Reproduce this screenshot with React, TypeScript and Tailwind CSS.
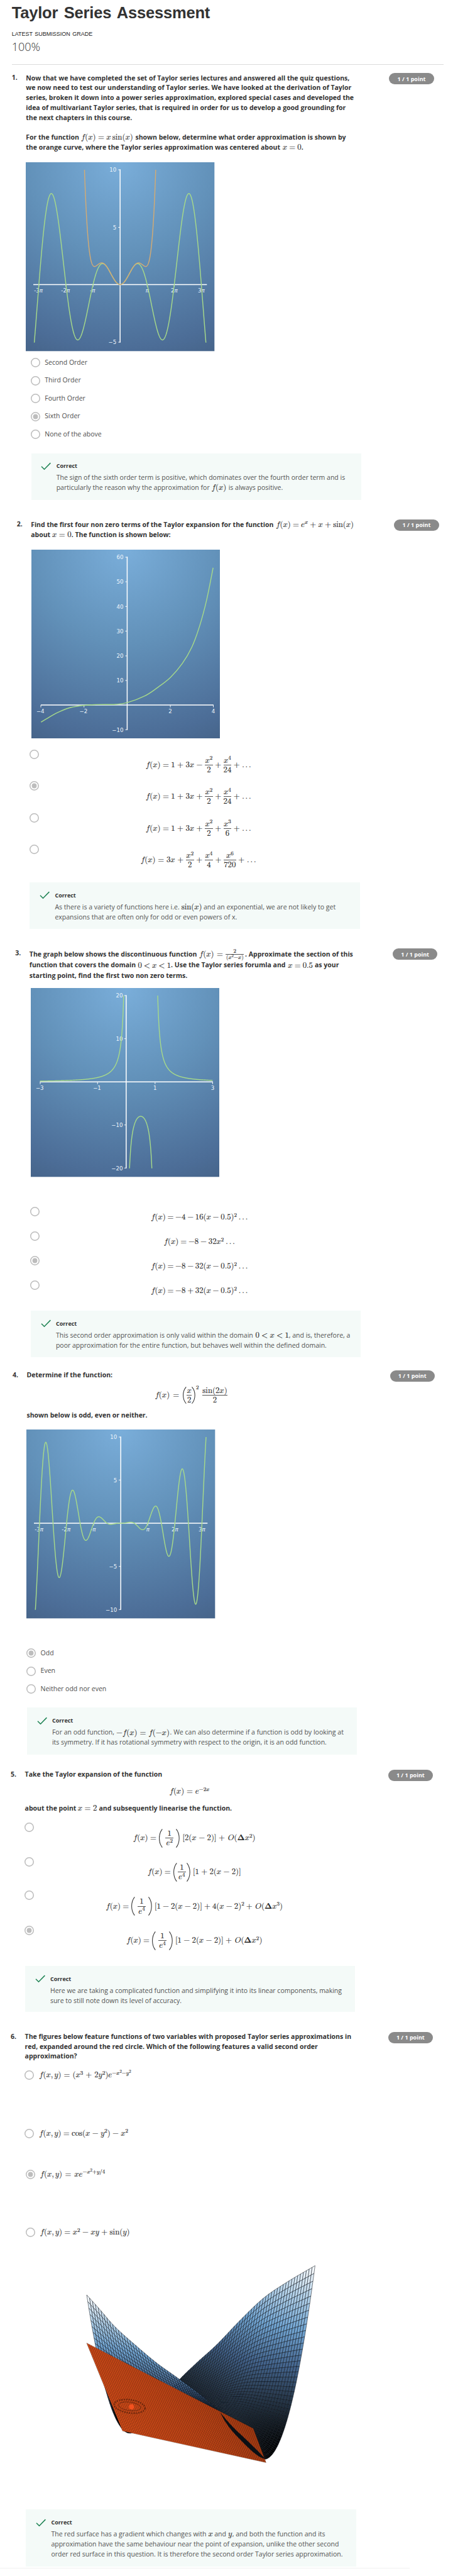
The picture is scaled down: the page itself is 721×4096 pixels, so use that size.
import type { ReactNode } from "react";

type Kids = { children?: ReactNode };
type Pt = [number, number];

/* ---------- text ---------- */

function T({ w, children }: Kids & { w: string }) {
  return <span className={`block shrink-0 whitespace-nowrap [text-align-last:justify] ${w}`}>{children}</span>;
}

function Line({ h = "h-[21px]", children }: Kids & { h?: string }) {
  return <div className={`flex items-center leading-[21px] ${h}`}>{children}</div>;
}

/* ---------- math ---------- */

function M({ w, children }: Kids & { w: string }) {
  return (
    <span className={`flex shrink-0 items-center justify-between whitespace-nowrap font-['Latin_Modern_Math',math,'Liberation_Serif',serif] text-[17px] font-normal leading-[20px] text-[#262626] [-webkit-text-stroke:0.2px_#262626] ${w}`}>
      {children}
    </span>
  );
}

const Fx = () => <span>𝑓(𝑥)</span>;
const Fxy = () => <span>𝑓(𝑥,<span className="ml-[2.5px]">𝑦)</span></span>;
const Dots = () => <span className="tracking-[2.6px]">...</span>;

const Sup = ({ children }: Kids) => (
  <span className="relative -top-[6px] inline-block text-[12px] leading-[12px]">{children}</span>
);

const Tiny = ({ children }: Kids) => <span className="relative -top-[4px] text-[9px]">{children}</span>;

function Frac({ n, d, w }: { n: ReactNode; d: ReactNode; w: string }) {
  return (
    <span className={`flex flex-col items-center text-center leading-[19px] ${w}`}>
      <span className="block h-[19px]">{n}</span>
      <span className="block h-[1.4px] w-full bg-[#555]" />
      <span className="block h-[19px]">{d}</span>
    </span>
  );
}

function Paren({ flip = false, h = "h-[40px]" }: { flip?: boolean; h?: string }) {
  return (
    <svg className={`w-[9px] ${h} ${flip ? "-scale-x-100" : ""}`} viewBox="0 0 9 40" preserveAspectRatio="none" fill="none" stroke="#333">
      <path d="M8.4 0.5C0 11 0 29 8.4 39.5" strokeWidth="1.4" />
    </svg>
  );
}

/* ---------- controls ---------- */

function Radio({ on = false }: { on?: boolean }) {
  return (
    <svg className="size-[20px] shrink-0" viewBox="0 0 20 20">
      <circle cx="10" cy="10" r="9" fill="#fff" stroke="#bdbdbd" strokeWidth="2" />
      {on && <circle cx="10" cy="10" r="5.2" fill="#bdbdbd" />}
    </svg>
  );
}

function Choice({ on, w, children }: Kids & { on?: boolean; w: string }) {
  return (
    <div className="flex h-[38px] items-center">
      <Radio on={on} />
      <span className="ml-[10px] text-[14px] leading-[21px] text-[#4d4d4d]"><T w={w}>{children}</T></span>
    </div>
  );
}

function MathChoice({ on, h, mt, children }: Kids & { on?: boolean; h: string; mt: string }) {
  return (
    <div className={`flex ${h}`}>
      <Radio on={on} />
      <div className={`flex h-0 w-[680px] items-center justify-center ${mt}`}>{children}</div>
    </div>
  );
}

function Feedback({ h, ml, children }: Kids & { h: string; ml: string }) {
  return (
    <div className={`flex w-[700px] bg-[#f4faf8] pt-[17px] ${h} ${ml}`}>
      <svg className="ml-[21px] mt-[2px] h-[17px] w-[22px] shrink-0" viewBox="0 0 22 17" fill="none" stroke="#1f8354" strokeWidth="2">
        <path d="M1.3 9L7.3 15L20.5 1.5" />
      </svg>
      <div className="ml-[10.5px] text-[14px] text-[#525252]">
        <div className="mb-[5px] text-[12px] font-bold leading-[20px] text-[#333]"><T w="w-[44.5px]">Correct</T></div>
        {children}
      </div>
    </div>
  );
}

function Question({ n, pl, h, children }: Kids & { n: number; pl: string; h: string }) {
  return (
    <section className={`flex ${pl} ${h}`}>
      <div className="w-[30px] shrink-0 text-[14px] font-bold leading-[21px] text-[#333]">{n}.</div>
      <div className="w-[770px] shrink-0">{children}</div>
      <div className="flex h-[24px] w-[95px] shrink-0 items-center justify-center rounded-[12px] bg-[#8a8a8a] text-[12px] font-bold text-white">
        1 / 1 point
      </div>
    </section>
  );
}

const Prompt = ({ children }: Kids) => <div className="pt-[0.4px] text-[14px] font-bold text-[#333]">{children}</div>;

/* ---------- plots ---------- */

const toPath = (pts: Pt[]) => pts.map(([x, y], i) => `${i ? "L" : "M"}${x.toFixed(2)} ${y.toFixed(2)}`).join("");

function sample(fn: (x: number) => number, a: number, b: number, sx: (x: number) => number, sy: (y: number) => number) {
  const pts: Pt[] = [];
  const steps = 600;
  for (let i = 0; i <= steps; i++) {
    const x = a + ((b - a) * i) / steps;
    const y = fn(x);
    if (Math.abs(y) < 60) pts.push([sx(x), sy(y)]);
  }
  return toPath(pts);
}

type Label = [string, number];

function Plot({ id, ox, oy, x0, x1, xs, ys, lx, margin, children }: Kids & {
  id: string; ox: number; oy: number; x0: number; x1: number; xs: Label[]; ys: Label[]; lx: number; margin: string;
}) {
  return (
    <svg className={`block h-[400px] w-[400px] ${margin}`} viewBox="0 0 400 400" fontFamily="'DejaVu Sans',sans-serif" fontSize="11.5" fill="#eef5fb">
      <defs>
        <radialGradient id={`bg-${id}`} gradientUnits="userSpaceOnUse" cx="200" cy="0" r="450">
          <stop offset="0" stopColor="#7aaeda" />
          <stop offset="0.44" stopColor="#6291b9" />
          <stop offset="0.88" stopColor="#4c6d97" />
          <stop offset="1" stopColor="#466489" />
        </radialGradient>
        <clipPath id={`clip-${id}`}><rect x="10" y="16" width="380" height="366" /></clipPath>
      </defs>
      <rect width="400" height="400" fill={`url(#bg-${id})`} />
      <g stroke="#fff" strokeWidth="2">
        <path d={`M${x0} ${oy}H${x1}M${ox} 15V382`} />
        <path strokeWidth="1.2" d={xs.map(([, x]) => `M${x} ${oy}v5`).join("") + ys.map(([, y]) => `M${ox} ${y}h-4`).join("")} />
      </g>
      {xs.map(([t, x]) => (
        <text key={t} x={x - (t.startsWith("-") || t.startsWith("−") ? 1 : 0)} y={oy + 17} textAnchor="middle">
          {t.replace("π", "")}{t.includes("π") && <tspan fontStyle="italic">π</tspan>}
        </text>
      ))}
      {ys.map(([t, y]) => <text key={t} x={lx} y={y + 4.5} textAnchor="end">{t}</text>)}
      <g fill="none" stroke="#a6d98a" strokeWidth="1.9" clipPath={`url(#clip-${id})`}>{children}</g>
    </svg>
  );
}

const PI_LABELS: Label[] = [["-3π", 27.8], ["-2π", 85.2], ["-π", 142.6], ["π", 257.4], ["2π", 314.8], ["3π", 372.2]];
const piX = (x: number) => 200 + (x / Math.PI) * 57.4;

function Plot1() {
  const sy = (y: number) => 259 - y * 24.35;
  return (
    <Plot id="a" ox={200} oy={259} x0={16} x1={384} xs={PI_LABELS} ys={[["10", 16], ["5", 138], ["−5", 381]]} lx={192} margin="mt-[20.6px]">
      <path d={sample((x) => x * Math.sin(x), -10, 10, piX, sy)} />
      <path stroke="#d3ab74" d={sample((x) => x * x - x ** 4 / 6 + x ** 6 / 120, -4.3, 4.3, piX, sy)} />
    </Plot>
  );
}

const GROWTH: Pt[] = [
  [20.3, 365.2], [41.1, 352.7], [59.5, 343.2], [82.8, 334.4], [111.5, 329.7], [136, 328.2], [178.9, 327.6], [203.4, 323.9],
  [240.1, 309.8], [264.6, 294.1], [294.6, 270.6], [319.7, 241.3], [339.9, 206.8], [356.4, 162.3], [371.7, 105.3], [385.2, 38.3],
];

function spline(p: Pt[]) {
  let d = `M${p[0][0]} ${p[0][1]}`;
  for (let i = 0; i < p.length - 1; i++) {
    const a = p[Math.max(0, i - 1)], b = p[i], c = p[i + 1], e = p[Math.min(p.length - 1, i + 2)];
    d += `C${b[0] + (c[0] - a[0]) / 6} ${b[1] + (c[1] - a[1]) / 6} ${c[0] - (e[0] - b[0]) / 6} ${c[1] - (e[1] - b[1]) / 6} ${c[0]} ${c[1]}`;
  }
  return d;
}

function Plot2() {
  return (
    <Plot id="b" ox={203} oy={329} x0={20} x1={386} xs={[["−4", 20], ["−2", 111.5], ["2", 294.5], ["4", 385.6]]}
      ys={[["60", 16], ["50", 68], ["40", 120.3], ["30", 172.5], ["20", 225], ["10", 277], ["−10", 381.3]]} lx={195} margin="mt-[19.6px] ml-[0.5px]">
      <path d={spline(GROWTH)} />
    </Plot>
  );
}

function Plot3() {
  const f = (x: number) => 2 / (x * x - x);
  const sx = (x: number) => 202.5 + x * 61;
  const sy = (y: number) => 198.7 - y * 9.13;
  return (
    <Plot id="c" ox={202.2} oy={198.7} x0={19.5} x1={386} xs={[["−3", 20], ["−1", 141.5], ["1", 263.5], ["3", 385.5]]}
      ys={[["20", 16], ["10", 107.4], ["−10", 290], ["−20", 381.3]]} lx={195} margin="mt-[15.6px] ml-[2.6px]">
      <path d={sample(f, -3, -0.04, sx, sy)} />
      <path d={sample(f, 0.04, 0.96, sx, sy)} />
      <path d={sample(f, 1.04, 3, sx, sy)} />
    </Plot>
  );
}

function Plot4() {
  const sy = (y: number) => 198.5 - y * 18.27;
  return (
    <Plot id="d" ox={200} oy={198.5} x0={16} x1={384} xs={PI_LABELS} ys={[["10", 16], ["5", 107], ["−5", 290], ["−10", 381.3]]} lx={192} margin="mt-[19.4px]">
      <path d={sample((x) => ((x / 2) ** 2 * Math.sin(2 * x)) / 2, -9.95, 9.95, piX, sy)} />
    </Plot>
  );
}

/* ---------- surface ---------- */

const BACK: Pt[] = [[0, 365], [0.233, 262], [0.336, 224], [0.45, 185], [0.582, 133], [0.714, 86], [0.847, 52], [1, 18]];
const FRONT: Pt[] = [[0, 80], [0.069, 109], [0.157, 147], [0.29, 192], [0.395, 225], [0.51, 256], [0.642, 293], [0.735, 325], [0.86, 374], [1, 428]];

function curve(p: Pt[], s: number) {
  let i = 0;
  while (i < p.length - 2 && s > p[i + 1][0]) i++;
  const slope = (k: number) => {
    const a = p[Math.max(0, k - 1)], b = p[Math.min(p.length - 1, k + 1)];
    return (b[1] - a[1]) / (b[0] - a[0]);
  };
  const w = p[i + 1][0] - p[i][0];
  const u = (s - p[i][0]) / w;
  return (
    (2 * u ** 3 - 3 * u * u + 1) * p[i][1] + (u ** 3 - 2 * u * u + u) * w * slope(i) +
    (-2 * u ** 3 + 3 * u * u) * p[i + 1][1] + (u ** 3 - u * u) * w * slope(i + 1)
  );
}

const surf = (s: number, t: number): Pt => [
  130 + 378 * s - 106 * t,
  (1 - t) * curve(BACK, s) + t * curve(FRONT, s) + 396 * t * (1 - t),
];

const RAMP: [number, number[]][] = [
  [0, [0, 0, 0]], [0.12, [20, 28, 36]], [0.25, [42, 60, 80]], [0.4, [66, 98, 138]], [0.62, [114, 166, 212]], [0.8, [176, 208, 233]], [1, [255, 255, 255]],
];

function shade(z: number) {
  const v = Math.min(1, Math.max(0, z));
  let i = 0;
  while (i < RAMP.length - 2 && v > RAMP[i + 1][0]) i++;
  const u = (v - RAMP[i][0]) / (RAMP[i + 1][0] - RAMP[i][0]);
  return `rgb(${RAMP[i][1].map((c, k) => Math.round(c + (RAMP[i + 1][1][k] - c) * u)).join(",")})`;
}

const red = (u: number, v: number): Pt => [
  (1 - v) * (24 + 353 * u) + v * (100 + 304 * u),
  (1 - v) * (182 + 181 * u) + v * (368 + 67 * u),
];

function Surface() {
  const NS = 62, NT = 48;
  const cells: ReactNode[] = [];
  for (let j = 0; j < NT; j++) {
    for (let i = 0; i < NS; i++) {
      const s = i / NS, t = j / NT, s2 = (i + 1) / NS, t2 = (j + 1) / NT;
      const mid = surf((s + s2) / 2, (t + t2) / 2);
      const z = (300 + 33 * (s + s2) / 2 + 95 * (t + t2) / 2 - mid[1]) / 315;
      cells.push(<path key={`${i}-${j}`} fill={shade(z)} d={toPath([surf(s, t), surf(s2, t), surf(s2, t2), surf(s, t2)]) + "Z"} />);
    }
  }
  let grid = "";
  for (let i = 0; i <= 72; i++) grid += toPath([red(i / 72, 0), red(i / 72, 1)]);
  for (let i = 0; i <= 48; i++) grid += toPath([red(0, i / 48), red(1, i / 48)]);
  return (
    <svg className="mt-[40px] ml-[107.3px] block h-[450px] w-[520px]" viewBox="0 0 520 450">
      <g stroke="#0b1118" strokeWidth="0.7">{cells}</g>
      <path d={toPath([red(0, 0), red(1, 0), red(1, 1), red(0, 1)]) + "Z"} fill="#e8541c" />
      <path d={grid} fill="none" stroke="#2a0f06" strokeWidth="0.5" />
      <g fill="none" stroke="#2a0f06" strokeOpacity="0.5" transform="rotate(8 115 316)">
        <ellipse cx="115" cy="316" rx="33" ry="14" strokeWidth="3" strokeDasharray="3 2" />
        <ellipse cx="115" cy="316" rx="24" ry="9" strokeWidth="1.2" />
      </g>
      <circle cx="119" cy="317" r="5.5" fill="#f4511e" />
      <path d="M307 329C315 338 325 352 352 377C368 392 392 415 403 428C385 424 366 403 349 386C330 367 318 352 307 329Z" fill="#0b0f14" />
    </svg>
  );
}

/* ---------- formulas ---------- */

const Pow = ({ p }: { p: string }) => <>𝑥<Sup>{p}</Sup></>;
const Shifted = ({ a, op, b }: { a: string; op: string; b: string }) => (
  <M w="w-[208px]">
    <Fx /><span>=</span><span>−{a}</span><span>{op}</span><span>{b}(𝑥</span><span>−</span><span>0.5)<Sup>2</Sup></span><Dots />
  </M>
);

function Terms({ op = "+", n, d }: { op?: string; n: string; d: string }) {
  return (
    <M w="w-[226px]">
      <Fx /><span>=</span><span>1</span><span>+</span><span>3𝑥</span><span>{op}</span>
      <Frac w="w-[17px]" n={<Pow p="2" />} d="2" /><span>+</span>
      <Frac w="w-[17px]" n={<Pow p={n} />} d={d} /><span>+</span><Dots />
    </M>
  );
}

const Coef = ({ p, w = "w-[46px]" }: { p: string; w?: string }) => (
  <span className={`flex items-center justify-between ${w}`}>
    <Paren /><Frac w="w-[17px]" n="1" d={<>𝑒<Sup>{p}</Sup></>} /><Paren flip />
  </span>
);

const Order = ({ p }: { p: string }) => <span className="ml-[2px]">𝑂(𝚫𝑥<Sup>{p}</Sup>)</span>;

export default function App() {
  return (
    <main className="h-[4096px] w-[721px] overflow-hidden bg-white">
      <div className="w-[960px] font-['Open_Sans',sans-serif] text-[#333] [zoom:0.7508]">
        <header className="h-[155px] pl-[25px]">
          <h1 className="pt-[7px] font-['Liberation_Sans',sans-serif] text-[34px] font-bold leading-[40px] tracking-[-0.28px]"><T w="w-[420px]">Taylor Series Assessment</T></h1>
          <div className="mt-[14px] font-['Liberation_Sans',sans-serif] text-[12px] leading-[22px] text-[#222]"><T w="w-[171px]">LATEST SUBMISSION GRADE</T></div>
          <div className="text-[24px] font-light leading-[32px]">100%</div>
          <div className="mt-[20.5px] w-[915px] border-t border-[#dcdcdc]" />
        </header>

        <Question n={1} pl="pl-[25px]" h="h-[945px]">
          <Prompt>
            <Line><T w="w-[686px]">Now that we have completed the set of Taylor series lectures and answered all the quiz questions,</T></Line>
            <Line><T w="w-[690px]">we now need to test our understanding of Taylor series. We have looked at the derivation of Taylor</T></Line>
            <Line><T w="w-[695px]">series, broken it down into a power series approximation, explored special cases and developed the</T></Line>
            <Line><T w="w-[678px]">idea of multivariant Taylor series, that is required in order for us to develop a good grounding for</T></Line>
            <Line><T w="w-[225px]">the next chapters in this course.</T></Line>
            <div className="h-[20px]" />
            <Line h="h-[22px]">
              <T w="w-[112px]">For the function</T>
              <span className="ml-[5px]"><M w="w-[110px]"><Fx /><span>=</span><span>𝑥<span className="ml-[3px]">sin(𝑥)</span></span></M></span>
              <span className="ml-[5px]"><T w="w-[446px]">shown below, determine what order approximation is shown by</T></span>
            </Line>
            <Line>
              <T w="w-[539px]">the orange curve, where the Taylor series approximation was centered about</T>
              <span className="ml-[5px]"><M w="w-[40px]"><span>𝑥</span><span>=</span><span>0</span></M></span>.
            </Line>
          </Prompt>
          <Plot1 />
          <div className="mt-[5px] ml-[10px]">
            <Choice w="w-[90px]">Second Order</Choice>
            <Choice w="w-[76px]">Third Order</Choice>
            <Choice w="w-[86px]">Fourth Order</Choice>
            <Choice on w="w-[75px]">Sixth Order</Choice>
            <Choice w="w-[120px]">None of the above</Choice>
          </div>
          <div className="h-[21px]" />
          <Feedback h="h-[98.5px]" ml="ml-[11px]">
            <Line><T w="w-[612px]">The sign of the sixth order term is positive, which dominates over the fourth order term and is</T></Line>
            <Line>
              <T w="w-[325px]">particularly the reason why the approximation for</T>
              <span className="ml-[4px]"><M w="w-[32px]"><Fx /></M></span>
              <span className="ml-[4px]"><T w="w-[115px]">is always positive.</T></span>
            </Line>
          </Feedback>
        </Question>

        <Question n={2} pl="pl-[35.5px]" h="h-[909px]">
          <Prompt>
            <Line h="h-[22px]">
              <T w="w-[514.5px]">Find the first four non zero terms of the Taylor expansion for the function</T>
              <span className="ml-[5px]"><M w="w-[165px]"><Fx /><span>=</span><span>𝑒<Sup>𝑥</Sup></span><span>+</span><span>𝑥</span><span>+</span><span>sin(𝑥)</span></M></span>
            </Line>
            <Line h="h-[22px]">
              <T w="w-[41px]">about</T>
              <span className="ml-[4px]"><M w="w-[41px]"><span>𝑥</span><span>=</span><span>0</span></M></span>
              <T w="w-[209px]">. The function is shown below:</T>
            </Line>
          </Prompt>
          <Plot2 />
          <div className="mt-[23.6px] -ml-[3.5px]">
            <MathChoice h="h-[67.3px]" mt="mt-[32.5px]"><Terms op="−" n="4" d="24" /></MathChoice>
            <MathChoice on h="h-[67.3px]" mt="mt-[32.5px]"><Terms n="4" d="24" /></MathChoice>
            <MathChoice h="h-[67.3px]" mt="mt-[32.5px]"><Terms n="3" d="6" /></MathChoice>
            <MathChoice h="h-[67.3px]" mt="mt-[32.5px]">
              <M w="w-[247px]">
                <Fx /><span>=</span><span>3𝑥</span><span>+</span><Frac w="w-[17px]" n={<Pow p="2" />} d="2" /><span>+</span>
                <Frac w="w-[17px]" n={<Pow p="4" />} d="4" /><span>+</span><Frac w="w-[26px]" n={<Pow p="6" />} d="720" /><span>+</span><Dots />
              </M>
            </MathChoice>
          </div>
          <div className="h-[12.2px]" />
          <Feedback h="h-[99px]" ml="-ml-[2.5px]">
            <Line h="h-[22px]">
              <T w="w-[264px]">As there is a variety of functions here i.e.</T>
              <span className="ml-[4px]"><M w="w-[43px]"><span>sin(𝑥)</span></M></span>
              <span className="ml-[4px]"><T w="w-[280px]">and an exponential, we are not likely to get</T></span>
            </Line>
            <Line><T w="w-[386px]">expansions that are often only for odd or even powers of x.</T></Line>
          </Feedback>
        </Question>

        <Question n={3} pl="pl-[32.4px]" h="h-[893px]">
          <Prompt>
            <Line h="h-[24px]">
              <T w="w-[355px]">The graph below shows the discontinuous function</T>
              <span className="ml-[5px]">
                <M w="w-[95px]">
                  <Fx /><span>=</span>
                  <span className="flex w-[39px] flex-col items-center text-[12px] leading-[12px]">
                    <span>2</span><span className="h-[1.4px] w-full bg-[#555]" /><span>(𝑥<Tiny>2</Tiny>−𝑥)</span>
                  </span>
                </M>
              </span>
              <span className="ml-[2px]"><T w="w-[229px]">. Approximate the section of this</T></span>
            </Line>
            <Line h="h-[23px]">
              <T w="w-[225px]">function that covers the domain</T>
              <span className="ml-[5px]"><M w="w-[70px]"><span>0</span><span>&lt;</span><span>𝑥</span><span>&lt;</span><span>1</span></M></span>
              <T w="w-[243px]">. Use the Taylor series forumla and</T>
              <span className="ml-[5px]"><M w="w-[53px]"><span>𝑥</span><span>=</span><span>0.5</span></M></span>
              <span className="ml-[4px]"><T w="w-[51px]">as your</T></span>
            </Line>
            <Line><T w="w-[335px]">starting point, find the first two non zero terms.</T></Line>
          </Prompt>
          <Plot3 />
          <div className="mt-[63px] ml-[1.6px]">
            <MathChoice h="h-[52.1px]" mt="mt-[22.2px]"><Shifted a="4" op="−" b="16" /></MathChoice>
            <MathChoice h="h-[52.1px]" mt="mt-[22.2px]">
              <M w="w-[153px]"><Fx /><span>=</span><span>−8</span><span>−</span><span>32𝑥<Sup>2</Sup></span><Dots /></M>
            </MathChoice>
            <MathChoice on h="h-[52.1px]" mt="mt-[22.2px]"><Shifted a="8" op="−" b="32" /></MathChoice>
            <MathChoice h="h-[52.1px]" mt="mt-[22.2px]"><Shifted a="8" op="+" b="32" /></MathChoice>
          </div>
          <div className="h-[11.6px]" />
          <Feedback h="h-[98.5px]" ml="ml-[2.6px]">
            <Line h="h-[22px]">
              <T w="w-[418px]">This second order approximation is only valid within the domain</T>
              <span className="ml-[5px]"><M w="w-[71px]"><span>0</span><span>&lt;</span><span>𝑥</span><span>&lt;</span><span>1</span></M></span>
              <T w="w-[129px]">, and is, therefore, a</T>
            </Line>
            <Line><T w="w-[574px]">poor approximation for the entire function, but behaves well within the defined domain.</T></Line>
          </Feedback>
        </Question>

        <Question n={4} pl="pl-[26.5px]" h="h-[846px]">
          <Prompt>
            <Line><T w="w-[182px]">Determine if the function:</T></Line>
            <div className="flex h-[64px] w-[698px] items-center justify-center">
              <M w="w-[154px]">
                <Fx /><span>=</span>
                <span className="flex items-center"><Paren h="h-[36px]" /><Frac w="w-[11px]" n="𝑥" d="2" /><Paren flip h="h-[36px]" /><span className="relative -top-[17px] text-[12px]">2</span></span>
                <Frac w="w-[54px]" n="sin(2𝑥)" d="2" />
              </M>
            </div>
            <Line><T w="w-[256px]">shown below is odd, even or neither.</T></Line>
          </Prompt>
          <Plot4 />
          <div className="mt-[54.5px] -ml-[0.5px]">
            <Choice on w="w-[28px]">Odd</Choice>
            <Choice w="w-[31px]">Even</Choice>
            <Choice w="w-[139px]">Neither odd nor even</Choice>
          </div>
          <div className="h-[20.5px]" />
          <Feedback h="h-[99px]" ml="ml-[0.5px]">
            <Line h="h-[22px]">
              <T w="w-[132px]">For an odd function,</T>
              <span className="ml-[4px]"><M w="w-[113px]"><span>−𝑓(𝑥)</span><span>=</span><span>𝑓(−𝑥)</span></M></span>
              <span className="ml-[1px]"><T w="w-[368px]">. We can also determine if a function is odd by looking at</T></span>
            </Line>
            <Line><T w="w-[582px]">its symmetry. If it has rotational symmetry with respect to the origin, it is an odd function.</T></Line>
          </Feedback>
        </Question>

        <Question n={5} pl="pl-[22.7px]" h="h-[555px]">
          <Prompt>
            <Line><T w="w-[291px]">Take the Taylor expansion of the function</T></Line>
            <div className="flex h-[50px] w-[698px] items-center justify-center">
              <M w="w-[85px]"><Fx /><span>=</span><span>𝑒<Sup>−2𝑥</Sup></span></M>
            </div>
            <Line>
              <T w="w-[109px]">about the point</T>
              <span className="ml-[3px]"><M w="w-[41px]"><span>𝑥</span><span>=</span><span>2</span></M></span>
              <span className="ml-[4px]"><T w="w-[282px]">and subsequently linearise the function.</T></span>
            </Line>
          </Prompt>
          <div className="mt-[19.6px] -ml-[0.7px]">
            <MathChoice h="h-[73.7px]" mt="mt-[33px]">
              <M w="w-[259px]"><Fx /><span>=</span><Coef p="2" /><span>[2(𝑥</span><span>−</span><span>2)]</span><span>+</span><Order p="2" /></M>
            </MathChoice>
            <MathChoice h="h-[70.5px]" mt="mt-[31px]">
              <M w="w-[198px]"><Fx /><span>=</span><Coef p="4" w="w-[38px]" /><span>[1</span><span>+</span><span>2(𝑥</span><span>−</span><span>2)]</span></M>
            </MathChoice>
            <MathChoice h="h-[73.7px]" mt="mt-[33px]">
              <M w="w-[375px]"><Fx /><span>=</span><Coef p="4" /><span>[1</span><span>−</span><span>2(𝑥</span><span>−</span><span>2)]</span><span>+</span><span>4(𝑥</span><span>−</span><span>2)<Sup>2</Sup></span><span>+</span><Order p="3" /></M>
            </MathChoice>
            <MathChoice on h="h-[73px]" mt="mt-[32.3px]">
              <M w="w-[288px]"><Fx /><span>=</span><Coef p="4" /><span>[1</span><span>−</span><span>2(𝑥</span><span>−</span><span>2)]</span><span>+</span><Order p="2" /></M>
            </MathChoice>
          </div>
          <div className="h-[13.1px]" />
          <Feedback h="h-[97.6px]" ml="ml-[0.3px]">
            <Line h="h-[21.5px]"><T w="w-[618px]">Here we are taking a complicated function and simplifying it into its linear components, making</T></Line>
            <Line><T w="w-[278px]">sure to still note down its level of accuracy.</T></Line>
          </Feedback>
        </Question>

        <Question n={6} pl="pl-[22.7px]" h="h-[1135px]">
          <Prompt>
            <Line><T w="w-[692px]">The figures below feature functions of two variables with proposed Taylor series approximations in</T></Line>
            <Line><T w="w-[621px]">red, expanded around the red circle. Which of the following features a valid second order</T></Line>
            <Line><T w="w-[110px]">approximation?</T></Line>
          </Prompt>
          <div className="mt-[16.6px] -ml-[0.7px] flex h-[24px] items-center">
            <Radio />
            <span className="ml-[11px]"><M w="w-[195px]"><Fxy /><span>=</span><span>(<Pow p="3" /></span><span>+</span><span>2𝑦<Sup>2</Sup>)𝑒<Sup>−𝑥<Tiny>2</Tiny>−𝑦<Tiny>2</Tiny></Sup></span></M></span>
          </div>
          <div className="mt-[99px] -ml-[0.7px] flex h-[24px] items-center">
            <Radio />
            <span className="ml-[11px]"><M w="w-[189px]"><Fxy /><span>=</span><span>cos(𝑥</span><span>−</span><span>𝑦<Sup>2</Sup>)</span><span>−</span><span><Pow p="2" /></span></M></span>
          </div>
          <div className="mt-[63px] ml-[1.3px] flex h-[24px] items-center">
            <Radio on />
            <span className="ml-[11px]"><M w="w-[138px]"><Fxy /><span>=</span><span>𝑥𝑒<Sup>−𝑥<Tiny>2</Tiny>+𝑦/4</Sup></span></M></span>
          </div>
          <div className="mt-[99px] ml-[1.3px] flex h-[24px] items-center">
            <Radio />
            <span className="ml-[11px]"><M w="w-[190px]"><Fxy /><span>=</span><span><Pow p="2" /></span><span>−</span><span>𝑥𝑦</span><span>+</span><span>sin(𝑦)</span></M></span>
          </div>
          <Surface />
          <div className="h-[85px]" />
          <Feedback h="h-[120px]" ml="ml-[2.3px]">
            <Line h="h-[21.5px]">
              <T w="w-[329px]">The red surface has a gradient which changes with</T>
              <span className="ml-[4px]"><M w="w-[9px]"><span>𝑥</span></M></span>
              <span className="ml-[4px]"><T w="w-[25px]">and</T></span>
              <span className="ml-[4px]"><M w="w-[9px]"><span>𝑦</span></M></span>
              <T w="w-[197px]">, and both the function and its</T>
            </Line>
            <Line h="h-[21.5px]"><T w="w-[610px]">approximation have the same behaviour near the point of expansion, unlike the other second</T></Line>
            <Line><T w="w-[618px]">order red surface in this question. It is therefore the second order Taylor series approximation.</T></Line>
          </Feedback>
        </Question>
        <div className="h-[2px] w-[868px] bg-[#f1f1f1]" />
      </div>
    </main>
  );
}
